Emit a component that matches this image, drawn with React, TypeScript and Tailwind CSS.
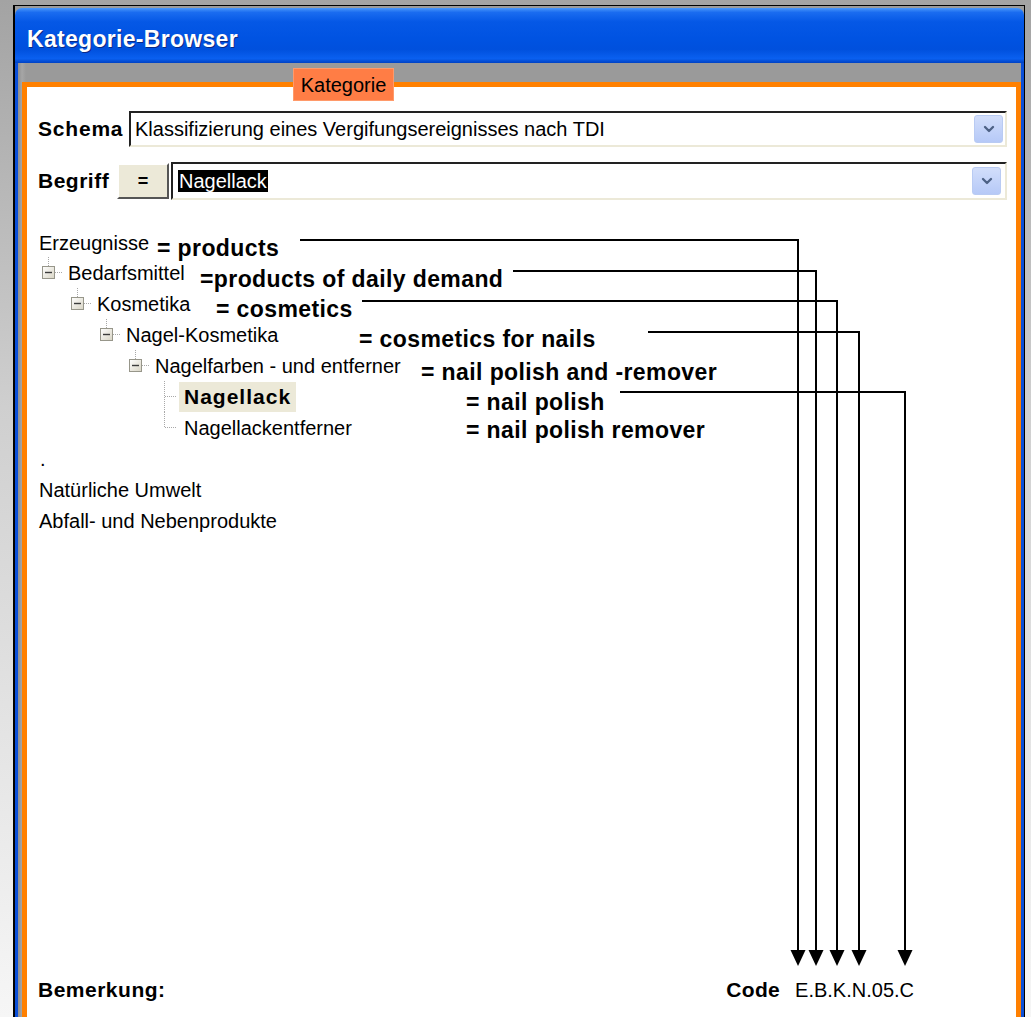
import { ChevronDown } from "lucide-react";

const SANS = "font-['Liberation_Sans',Arial,Helvetica,sans-serif]";

type Node = {
  label: string;
  level: number;
  kind: "root" | "open" | "leaf" | "leafLast";
  selected?: boolean;
};

const tree: Node[] = [
  { label: "Erzeugnisse", level: 0, kind: "root" },
  { label: "Bedarfsmittel", level: 1, kind: "open" },
  { label: "Kosmetika", level: 2, kind: "open" },
  { label: "Nagel-Kosmetika", level: 3, kind: "open" },
  { label: "Nagelfarben - und entferner", level: 4, kind: "open" },
  { label: "Nagellack", level: 5, kind: "leaf", selected: true },
  { label: "Nagellackentferner", level: 5, kind: "leafLast" },
];

const indent = ["pl-[7px]", "pl-[15px]", "pl-[44px]", "pl-[73px]", "pl-[102px]", "pl-[131px]"];

const notes = [
  { text: "= products", cls: "left-[157px] top-[234px]" },
  { text: "=products of daily demand", cls: "left-[200px] top-[265px]" },
  { text: "= cosmetics", cls: "left-[216px] top-[295px]" },
  { text: "= cosmetics for nails", cls: "left-[359px] top-[325px]" },
  { text: "= nail polish and -remover", cls: "left-[421px] top-[358px]" },
  { text: "= nail polish", cls: "left-[466px] top-[388px]" },
  { text: "= nail polish remover", cls: "left-[466px] top-[416px]" },
];

const leaders = [
  { d: "M300 240 H798 V952", x: 798 },
  { d: "M513 271 H816 V952", x: 816 },
  { d: "M362 301 H837 V952", x: 837 },
  { d: "M648 332 H859 V952", x: 859 },
  { d: "M620 392 H905 V952", x: 905 },
];

function Expander() {
  return (
    <svg width="21" height="31" viewBox="0 0 21 31" className="shrink-0">
      <line x1="6.5" y1="0" x2="6.5" y2="9" stroke="#a8a8a8" strokeDasharray="1 1" />
      <defs>
        <linearGradient id="exp" x1="0" y1="0" x2="1" y2="1">
          <stop offset="0" stopColor="#ffffff" />
          <stop offset="1" stopColor="#d8d4c4" />
        </linearGradient>
      </defs>
      <rect x="0.5" y="9.5" width="12" height="12" fill="url(#exp)" stroke="#97968a" />
      <line x1="3" y1="15.5" x2="10" y2="15.5" stroke="#3c3c3c" strokeWidth="1.4" />
      <line x1="13" y1="15.5" x2="21" y2="15.5" stroke="#a8a8a8" strokeDasharray="1 1" />
    </svg>
  );
}

function Leaf({ last }: { last: boolean }) {
  return (
    <svg width="21" height="31" viewBox="0 0 21 31" className="shrink-0">
      <line x1="6.5" y1="0" x2="6.5" y2={last ? 15.5 : 31} stroke="#a8a8a8" strokeDasharray="1 1" />
      <line x1="7" y1="15.5" x2="19" y2="15.5" stroke="#a8a8a8" strokeDasharray="1 1" />
    </svg>
  );
}

function ComboButton() {
  return (
    <div className="flex h-[28px] w-[29px] items-center justify-center rounded-[3px] border border-[#b9cbf3] bg-[linear-gradient(to_bottom,#d2defb,#b6c9f7)]">
      <ChevronDown size={16} strokeWidth={3.5} color="#4d6185" />
    </div>
  );
}

export default function App() {
  return (
    <div
      className={`relative h-[1017px] w-[1031px] overflow-hidden bg-[linear-gradient(to_bottom,#a3a3a3,#cfcfcf_40%,#f6f6f6)] pl-[13px] pr-[6px] pt-[5px] text-black ${SANS}`}
    >
      {/* window frame */}
      <div className="flex h-[1022px] flex-col border-l-2 border-r border-t border-black bg-[#9a9a9a] pt-[2px]">
        {/* title bar */}
        <div className="flex h-[55px] items-center rounded-t-[7px] bg-[linear-gradient(to_bottom,#4a97fa_0%,#1a6cf0_8%,#0558e6_25%,#0053e2_55%,#0050dd_75%,#0a60f0_92%,#0042c4_100%)] pl-[12px] pt-[8px]">
          <span className="text-[23px] font-bold tracking-[0.3px] text-white [text-shadow:1px_1px_0_#0a2a86]">
            Kategorie-Browser
          </span>
        </div>

        {/* body */}
        <div className="flex flex-1 flex-col border-x-[3px] border-[#0b4fd8] bg-[linear-gradient(to_right,#8e8e8e,#a6a6a6_4px,#9a9a9a_8px)] pl-[4px] pt-[19px]">
          <div className="relative flex flex-1 flex-col border-[5px] border-[#ff8000] bg-white">
            {/* tab label sitting on the frame */}
            <div className="absolute left-[266px] top-[-19px] flex h-[33px] w-[101px] items-center justify-center border border-[#ff9a6a] bg-[#ff7d45] text-[20px]">
              Kategorie
            </div>

            {/* Schema */}
            <div className="mt-[24px] flex h-[36px] items-center pl-[11px] pr-[9px]">
              <div className="w-[91px] text-[21px] font-bold tracking-[0.8px]">Schema</div>
              <div className="flex h-[36px] flex-1 items-center justify-between border-2 border-b-[#ece9d8] border-l-[#222] border-r-[#ece9d8] border-t-[#222] bg-white pl-[4px] pr-[2px]">
                <span className="text-[20px] leading-none">Klassifizierung eines Vergifungsereignisses nach TDI</span>
                <ComboButton />
              </div>
            </div>

            {/* Begriff */}
            <div className="mt-[15px] flex h-[38px] items-center pl-[11px] pr-[9px]">
              <div className="w-[79px] text-[21px] font-bold tracking-[0.5px]">Begriff</div>
              <div className="flex h-[36px] w-[52px] items-center justify-center border-2 border-b-[#555] border-l-[#fff] border-r-[#555] border-t-[#fff] bg-[#ece9d8] text-[18px] font-bold">
                =
              </div>
              <div className="ml-[2px] flex h-[38px] flex-1 items-center justify-between border-2 border-b-[#ece9d8] border-l-[#222] border-r-[#ece9d8] border-t-[#222] bg-white pl-[5px] pr-[4px]">
                <span className="bg-black px-[1px] text-[20px] leading-[22px] text-white">Nagellack</span>
                <ComboButton />
              </div>
            </div>

            {/* category tree */}
            <div className="mt-[29px] flex flex-col text-[20px]">
              {tree.map((n, i) => (
                <div
                  key={n.label}
                  className={`flex items-center ${i === 0 ? "h-[28px]" : "h-[31px]"} ${indent[n.level]}`}
                >
                  {n.kind === "open" && <Expander />}
                  {n.kind === "leaf" && <Leaf last={false} />}
                  {n.kind === "leafLast" && <Leaf last={true} />}
                  {n.selected ? (
                    <span className="flex h-[30px] items-center bg-[#ece9d8] px-[5px] text-[21px] font-bold tracking-[1px]">
                      {n.label}
                    </span>
                  ) : (
                    <span className="px-[5px]">{n.label}</span>
                  )}
                </div>
              ))}
              <div className="flex h-[31px] items-center pl-[13px]">.</div>
              <div className="flex h-[31px] items-center pl-[12px]">Natürliche Umwelt</div>
              <div className="flex h-[31px] items-center pl-[12px]">Abfall- und Nebenprodukte</div>
            </div>

            <div className="flex-1" />

            {/* footer */}
            <div className="mb-[19px] flex h-[26px] items-center justify-between pl-[11px] pr-[102px]">
              <span className="text-[21px] font-bold tracking-[0.5px]">Bemerkung:</span>
              <div className="flex items-center gap-[15px]">
                <span className="text-[21px] font-bold tracking-[0.3px]">Code</span>
                <span className="text-[20px]">E.B.K.N.05.C</span>
              </div>
            </div>
          </div>
        </div>
      </div>

      {/* translation notes with leader arrows to the code segments */}
      <div className="pointer-events-none absolute inset-0">
        <svg width="1031" height="1017" className="absolute left-0 top-0">
          {leaders.map((l) => (
            <g key={l.x}>
              <path d={l.d} fill="none" stroke="#000" strokeWidth="2" />
              <polygon points={`${l.x - 7.5},950 ${l.x + 7.5},950 ${l.x},966`} fill="#000" />
            </g>
          ))}
        </svg>
        {notes.map((n) => (
          <div
            key={n.text}
            className={`absolute whitespace-nowrap text-[23px] font-bold leading-[28px] tracking-[0.4px] ${n.cls}`}
          >
            {n.text}
          </div>
        ))}
      </div>
    </div>
  );
}
